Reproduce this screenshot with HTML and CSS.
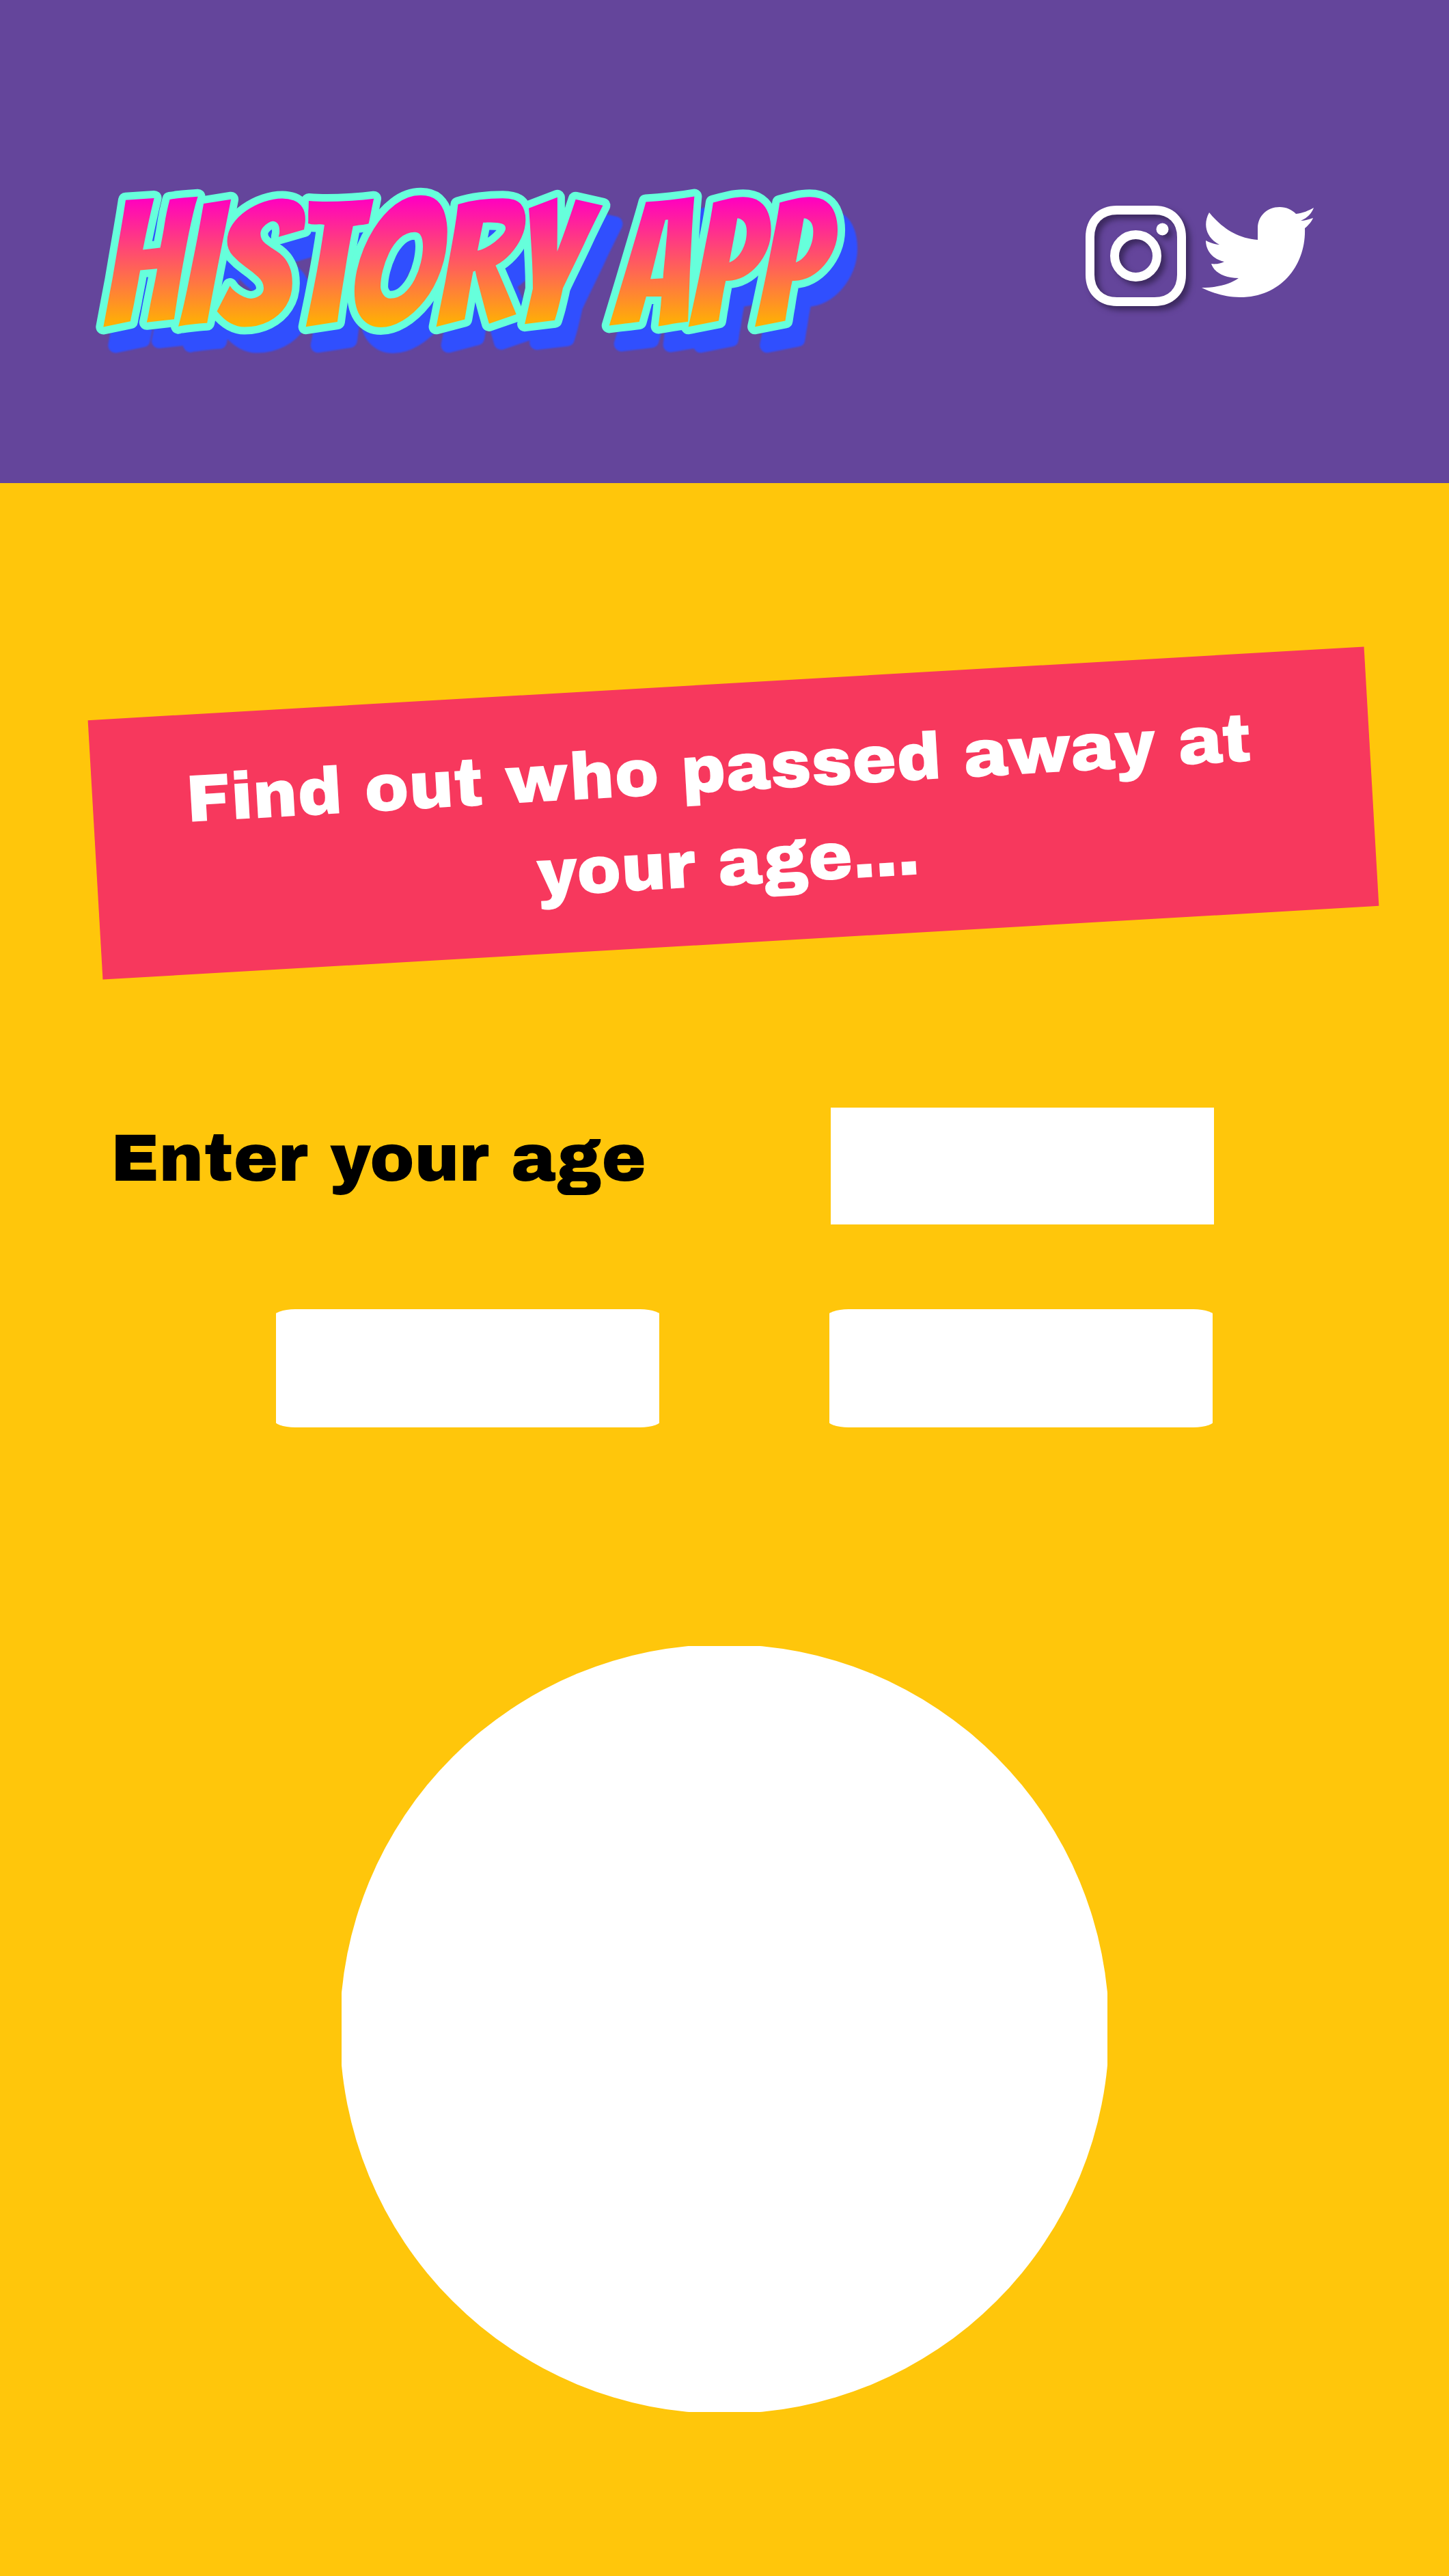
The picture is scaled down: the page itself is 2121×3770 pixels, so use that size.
FILE: index.html
```
<!DOCTYPE html>
<html lang="en">
<head>
<meta charset="utf-8">
<meta name="viewport" content="width=device-width, initial-scale=1">
<title>History App</title>
<link rel="stylesheet" href="styles.css">
</head>
<body>
<header class="site-header">
  <h1 class="logo">
    <svg class="logo-art" viewBox="0 0 1100 200" role="img" aria-label="History App">
      <defs>
        <linearGradient id="sunset" gradientUnits="userSpaceOnUse" x1="0" y1="6" x2="0" y2="194">
          <stop offset="0" stop-color="#ff00c0"/>
          <stop offset="1" stop-color="#ffb400"/>
        </linearGradient>
      </defs>
      <text class="logo-text" x="1" y="194" fill="url(#sunset)">HISTORY APP</text>
    </svg>
  </h1>
  <nav class="social" aria-label="Social media">
    <a class="social-link" href="#" aria-label="Instagram">
      <svg class="instagram" viewBox="0 0 147 147">
        <path d="M46 6.500H101C125 6.500 140.500 22 140.500 46V101C140.500 125 125 140.500 101 140.500H46C22 140.500 6.500 125 6.500 101V46C6.500 22 22 6.500 46 6.500Z"/>
        <circle cx="73.500" cy="73.500" r="31"/>
        <circle class="dot" cx="112.500" cy="34.500" r="9"/>
      </svg>
    </a>
    <a class="social-link" href="#" aria-label="Twitter">
      <svg class="twitter" viewBox="0 0 165 132">
        <path d="M11 8C28 29 51 46 82 48V31C82 13 96 0 114 0C124 0 132 4 138 10C148 9 157 5 164 1C161 9 155 16 145 20C151 20 157 18 163 16C161 21 156 27 151 31C153 84 117 132 56 132C34 132 14 125 0 118C22 118 42 113 54 104C32 104 18 95 14 83C20 84 27 83 33 80C16 76 6 64 6 49C12 52 20 55 26 55C7 45 1 26 11 8Z"/>
      </svg>
    </a>
  </nav>
</header>
<main class="content">
  <h2 class="banner">Find out who passed away at your age...</h2>
  <form class="age-form">
    <label class="age-label" for="age">Enter your age</label>
    <input class="age-input" id="age" name="age" type="text" inputmode="numeric">
    <button class="action action-start" type="submit" aria-label="Search"></button>
    <button class="action" type="reset" aria-label="Reset"></button>
  </form>
  <section class="result" aria-label="Result"></section>
</main>
</body>
</html>
```
FILE: styles.css
```
* {
  box-sizing: border-box;
}

body {
  margin: 0;
  background: #ffc60b;
  color: #000;
  font-family: "Archivo Black", "DejaVu Sans", sans-serif;
  font-size: 98px;
  line-height: 138px;
}

.site-header {
  display: flex;
  justify-content: space-between;
  align-items: flex-start;
  padding: 284px 197px 223px 148px;
  background: #64459b;
}

.logo {
  margin: 0;
  width: 1100px;
}

.logo-art {
  display: block;
  width: 100%;
  overflow: visible;
  filter: drop-shadow(18px 27px 1px #304ffe);
}

.logo-text {
  font-family: Bangers, "Roboto Condensed", sans-serif;
  font-size: 257px;
  font-weight: 400;
  stroke: #66ffdb;
  stroke-width: 22px;
  stroke-linejoin: round;
  paint-order: stroke;
}

.social {
  display: flex;
  align-items: flex-start;
  gap: 23px;
  padding-top: 17px;
}

.social-link {
  display: block;
}

.social svg {
  display: block;
  overflow: visible;
}

.instagram {
  width: 147px;
  fill: none;
  stroke: #fff;
  stroke-width: 13px;
  filter: drop-shadow(6px 6px 4px rgba(30, 20, 50, .6));
}

.instagram .dot {
  fill: #fff;
  stroke: none;
}

.twitter {
  width: 165px;
  margin-top: 2px;
  fill: #fff;
}

.content {
  padding: 293px 112px 240px;
}

.banner {
  margin: 0 0 0 26px;
  padding: 56px 142px 48px 118px;
  background: #f7385d;
  color: #fff;
  font-size: inherit;
  font-weight: 400;
  text-align: center;
  text-indent: -12px;
  transform: rotate(-3.3deg);
}

.age-form {
  display: grid;
  grid-template-columns: 1fr 561px;
  row-gap: 124px;
  margin: 241px 232px 0 50px;
}

.age-label {
  padding-top: 6px;
}

.age-input,
.action {
  width: 561px;
  height: 171px;
  border: 0;
  padding: 0 40px;
  background: #fff;
  font: inherit;
}

.action {
  height: 173px;
  margin-left: -2px;
  clip-path: inset(0 -4px round 32px / 12px);
}

.action-start {
  margin-left: 242px;
}

.result {
  width: 1121px;
  height: 1121px;
  margin: 320px auto 0;
  background: #fff;
  clip-path: circle(563px);
}
```
